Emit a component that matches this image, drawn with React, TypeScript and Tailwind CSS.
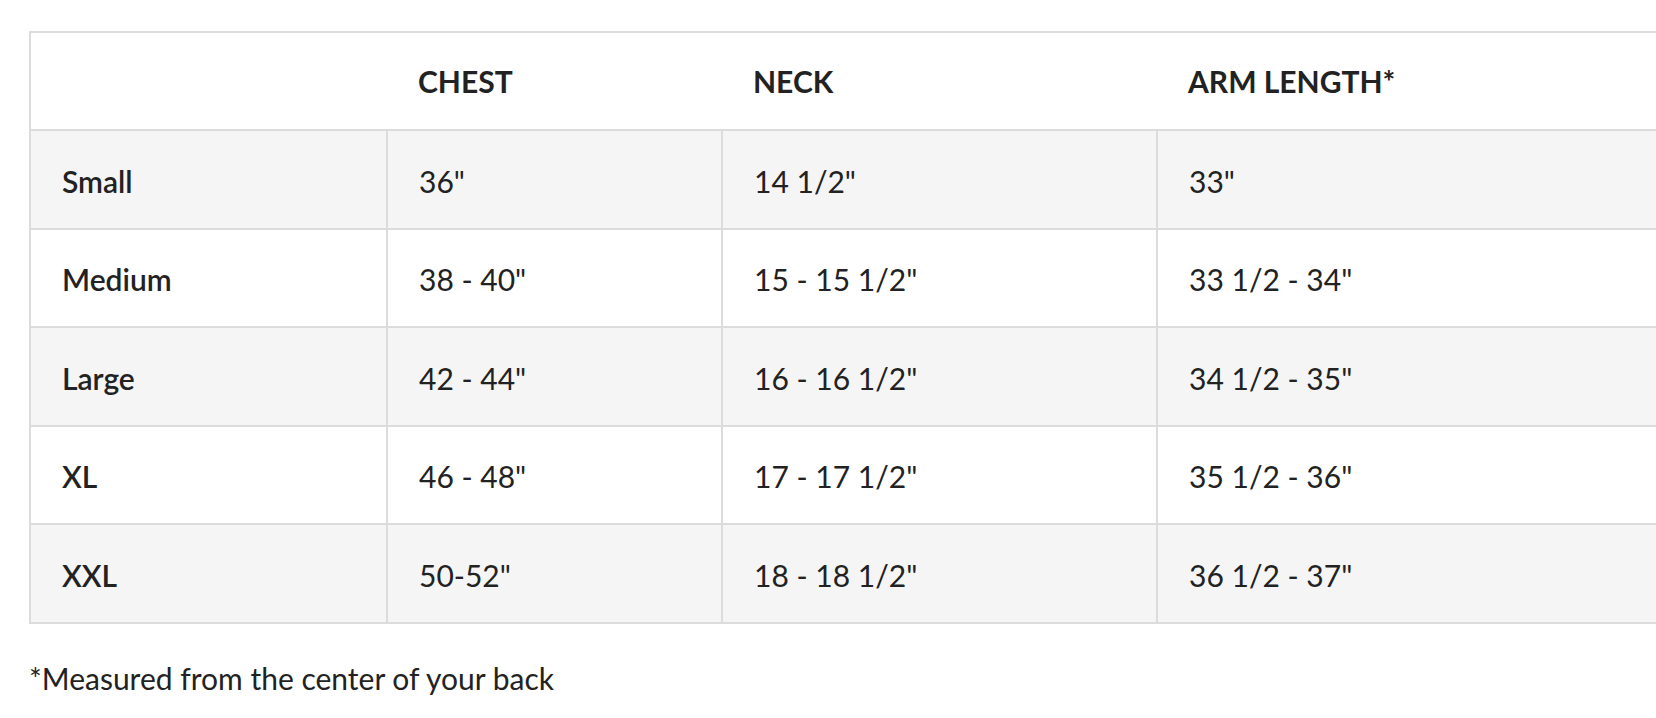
const rows = [
  ["Small", '36"', '14 1/2"', '33"'],
  ["Medium", '38 - 40"', '15 - 15 1/2"', '33 1/2 - 34"'],
  ["Large", '42 - 44"', '16 - 16 1/2"', '34 1/2 - 35"'],
  ["XL", '46 - 48"', '17 - 17 1/2"', '35 1/2 - 36"'],
  ["XXL", '50-52"', '18 - 18 1/2"', '36 1/2 - 37"'],
];

export default function App() {
  return (
    <div className="min-h-screen bg-white pt-[31px] pl-[29px] text-[#222] font-['Lato','Liberation_Sans',sans-serif] overflow-hidden">
      <table className="w-full table-fixed border-collapse border-2 border-r-0 border-[#dcdcdc] text-[30px] leading-none">
        <colgroup>
          <col className="w-[357px]" />
          <col className="w-[335px]" />
          <col className="w-[435px]" />
          <col />
        </colgroup>
        <thead>
          <tr className="h-[98px] border-b-2 border-[#dcdcdc]">
            <th />
            <th className="pl-[31px] text-left font-bold">CHEST</th>
            <th className="pl-[31px] text-left font-bold">NECK</th>
            <th className="pl-[31px] text-left font-bold">ARM LENGTH*</th>
          </tr>
        </thead>
        <tbody>
          {rows.map((r, i) => (
            <tr
              key={r[0]}
              className={
                "h-[98.5px] border-b-2 border-[#dcdcdc] " +
                (i % 2 === 0 ? "bg-[#f5f5f5]" : "bg-white")
              }
            >
              <td className="pl-[31px] pt-[3px] font-semibold">{r[0]}</td>
              <td className="pl-[31px] pt-[3px] border-l-2 border-[#dcdcdc]">{r[1]}</td>
              <td className="pl-[31px] pt-[3px] border-l-2 border-[#dcdcdc]">{r[2]}</td>
              <td className="pl-[31px] pt-[3px] border-l-2 border-[#dcdcdc]">{r[3]}</td>
            </tr>
          ))}
        </tbody>
      </table>
      <p className="mt-[39px] text-[30px] leading-none">*Measured from the center of your back</p>
    </div>
  );
}
